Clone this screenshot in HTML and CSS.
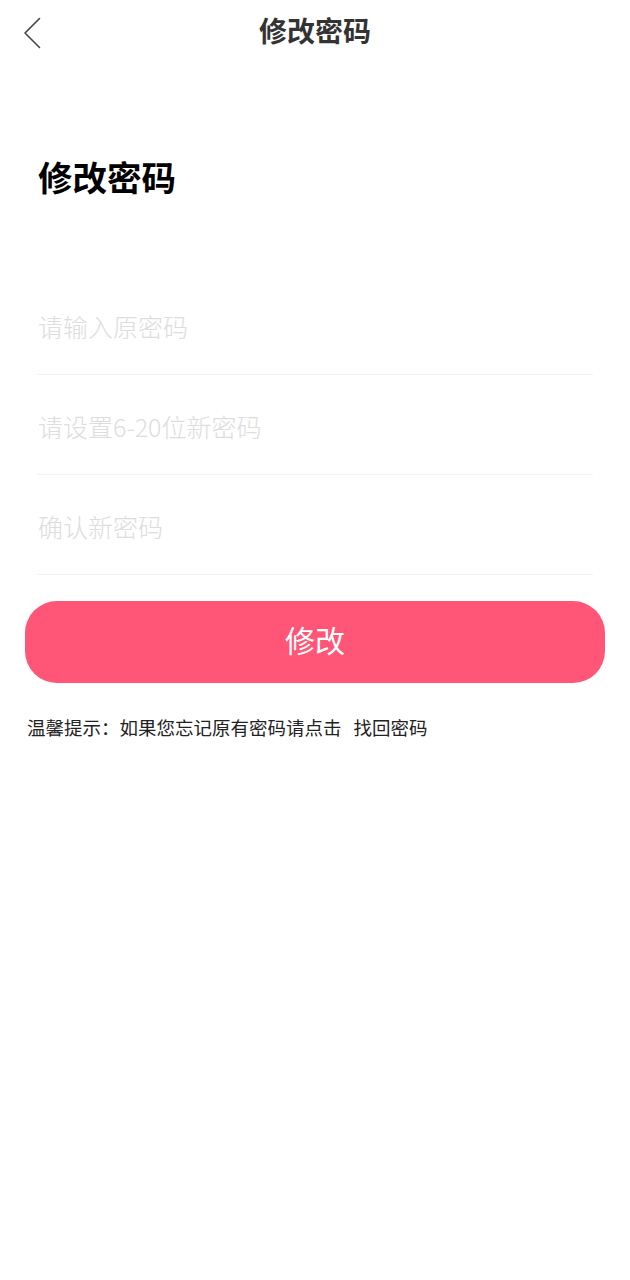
FILE: index.html
```html
<!DOCTYPE html>
<html lang="zh-CN">
<head>
  <meta charset="UTF-8">
  <title>修改密码</title>
  <meta name="viewport" content="width=device-width, initial-scale=1.0">
  <link rel="stylesheet" href="styles.css">
</head>
<body>
  <header class="nav-bar">
    <button class="back-btn" aria-label="返回">
      <svg width="18" height="32" viewBox="0 0 18 32">
        <path d="M16.5 1.5 L2 16 L16.5 30.5" fill="none" stroke="#444" stroke-width="1.6" stroke-linecap="round" stroke-linejoin="round"/>
      </svg>
    </button>
    <h2 class="nav-title">修改密码</h2>
  </header>

  <main class="page">
    <h1 class="page-title">修改密码</h1>

    <form class="pwd-form" onsubmit="return false">
      <div class="field">
        <input type="password" placeholder="请输入原密码">
      </div>
      <div class="field">
        <input type="password" placeholder="请设置6-20位新密码">
      </div>
      <div class="field">
        <input type="password" placeholder="确认新密码">
      </div>
    </form>

    <button class="submit-btn">修改</button>

    <p class="tip">温馨提示：如果您忘记原有密码请点击<a class="tip-link" href="#">找回密码</a></p>
  </main>
</body>
</html>
```

FILE: styles.css
```css
:root {
  --primary: #ff5576;
  --text: #222222;
  --placeholder: #dddddd;
  --line: #f3f3f3;
}

* {
  box-sizing: border-box;
}

body {
  font-family: 'Noto Sans CJK SC', 'Noto Sans', sans-serif;
  margin: 0;
  padding: 0;
  background: #ffffff;
  color: var(--text);
}

.nav-bar {
  position: relative;
  height: 64px;
  display: flex;
  align-items: center;
  justify-content: center;
  padding-bottom: 4px;
}

.back-btn {
  position: absolute;
  left: 23px;
  top: 17px;
  padding: 0;
  border: none;
  background: none;
  cursor: pointer;
  line-height: 0;
}

.nav-title {
  margin: 0;
  font-size: 28px;
  font-weight: 700;
  color: #333333;
  line-height: 1;
}

.page {
  padding: 0 25px;
}

.page-title {
  margin: 88px 0 0 13px;
  font-size: 34.5px;
  font-weight: 700;
  line-height: 48px;
  color: #000000;
}

.pwd-form {
  margin: 75px 12px 0;
}

.field {
  height: 100px;
  display: flex;
  align-items: center;
  padding-top: 2px;
  border-bottom: 1px solid var(--line);
}

.field input {
  width: 100%;
  border: none;
  outline: none;
  padding: 0 0 0 1px;
  font-family: inherit;
  font-size: 25px;
  font-weight: 300;
  color: var(--text);
  background: transparent;
}

.field input::placeholder {
  color: var(--placeholder);
}

.submit-btn {
  display: block;
  width: 100%;
  height: 82px;
  margin-top: 26px;
  padding: 0 0 6px;
  border: none;
  border-radius: 32px;
  background: var(--primary);
  color: #ffffff;
  font-family: inherit;
  font-size: 30px;
  cursor: pointer;
}

.tip {
  margin: 31px 0 0 2px;
  font-size: 18.5px;
  line-height: 26px;
  color: var(--text);
}

.tip-link {
  margin-left: 12px;
  color: var(--text);
  text-decoration: none;
}
```
